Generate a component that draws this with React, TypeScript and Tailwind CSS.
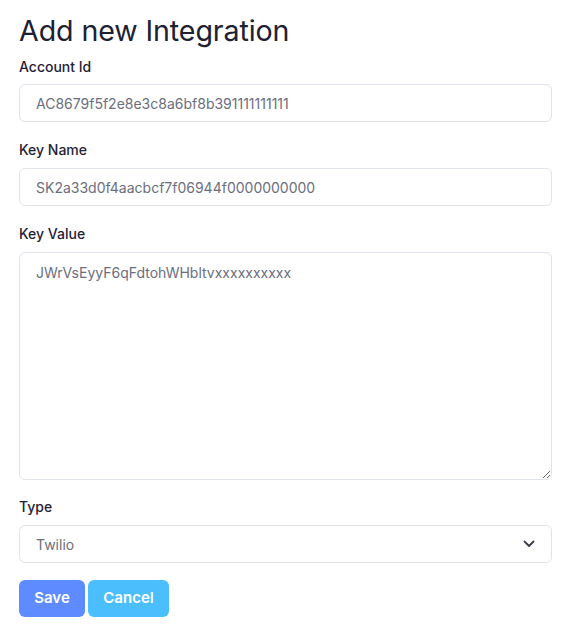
import React from "react";

export default function App() {
  const inputCls =
    "w-full h-[38px] rounded-md border border-[#dfe3ef] bg-white px-4 text-[14px] text-[#6b6e7e] outline-none";
  const labelCls = "text-[14px] font-medium leading-[20px] text-[#1f2235]";
  return (
    <div className="min-h-screen bg-white pl-[19px] pr-[17px] pt-[12px] pb-4 font-['Inter',sans-serif] text-[#1f2235]">
      <h1 className="text-[28.6px] leading-[38px] font-normal tracking-[-0.1px] text-[#1e2134]">Add new Integration</h1>
      <div className="mt-[7px] flex flex-col">
        <label className={labelCls}>Account Id</label>
        <input className={inputCls + " mt-[7px]"} defaultValue="AC8679f5f2e8e3c8a6bf8b391111111111" />
        <label className={labelCls + " mt-[18px]"}>Key Name</label>
        <input className={inputCls + " mt-[8px]"} defaultValue="SK2a33d0f4aacbcf7f06944f0000000000" />
        <label className={labelCls + " mt-[18px]"}>Key Value</label>
        <textarea
          className="mt-[8px] h-[228px] w-full rounded-md border border-[#dfe3ef] bg-white px-4 py-[9px] text-[14px] text-[#6b6e7e] outline-none"
          defaultValue="JWrVsEyyF6qFdtohWHbltvxxxxxxxxxx"
        />
        <label className={labelCls + " mt-[17px]"}>Type</label>
        <div className="relative mt-[8px]">
          <select className={inputCls + " appearance-none"} defaultValue="Twilio">
            <option>Twilio</option>
          </select>
          <svg className="pointer-events-none absolute right-[17px] top-[15px]" width="12" height="8" viewBox="0 0 12 8" fill="none">
            <path d="M1.5 1.5 L6 6 L10.5 1.5" stroke="#3b3f4c" strokeWidth="1.8" strokeLinecap="round" strokeLinejoin="round" />
          </svg>
        </div>
        <div className="mt-[17px] flex gap-[3px]">
          <button className="h-[37px] w-[66px] rounded-md bg-[#5e8bff] text-[15px] font-semibold text-white">Save</button>
          <button className="h-[37px] w-[81px] rounded-md bg-[#4bbffe] text-[15px] font-semibold text-white">Cancel</button>
        </div>
      </div>
    </div>
  );
}
